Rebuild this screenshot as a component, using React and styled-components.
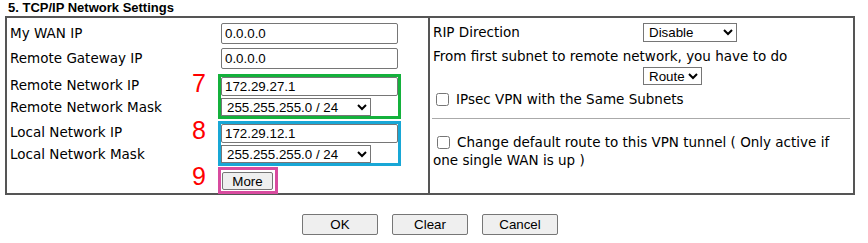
import styled, { createGlobalStyle } from 'styled-components';

const GlobalStyle = createGlobalStyle`
  body {
    margin: 0;
    background: #fff;
    color: #000;
    font-family: "DejaVu Sans", Verdana, sans-serif;
    font-size: 13.5px;
  }
`;

const Page = styled.div`
  width: 850px;
  padding-left: 5px;
`;

const Title = styled.div`
  font-family: "Liberation Sans", Arial, sans-serif;
  font-weight: bold;
  font-size: 13px;
  line-height: 15px;
  margin: 0 0 1px;
  padding-left: 3px;
`;

const Panel = styled.div`
  display: grid;
  grid-template-columns: 1fr 1fr;
  border: 2px solid #555;
  height: 175px;
`;

const LeftCell = styled.div`
  display: flex;
  flex-direction: column;
  padding: 5px 0 0 3px;
  border-right: 2px solid #555;
`;

const Row = styled.div`
  display: grid;
  grid-template-columns: 182px 26px auto;
  align-items: stretch;
  margin-top: ${({ $top }) => $top || 0}px;
`;

const Label = styled.div`
  line-height: ${({ $lh }) => $lh || 21}px;
  white-space: nowrap;
`;

const LabelStack = styled.div`
  display: flex;
  flex-direction: column;
  justify-content: space-around;
`;

const Num = styled.div`
  font-family: "Liberation Sans", Arial, sans-serif;
  font-size: 25px;
  line-height: 1;
  margin-top: -3px;
  color: #ff0000;
`;

const Control = styled.div`
  padding-left: 3px;
`;

const Mark = styled.div`
  display: flex;
  flex-direction: column;
  align-items: flex-start;
  gap: 2px;
  width: fit-content;
  border: 3px solid ${({ $color }) => $color};
  padding: ${({ $pad }) => $pad || '0'};
`;

const TextInput = styled.input`
  box-sizing: border-box;
  width: 177px;
  height: ${({ $h }) => $h || 21}px;
  border: 1px solid #767676;
  border-radius: 2px;
  padding: 1px 3px;
  font-family: "Liberation Sans", Arial, sans-serif;
  font-size: 13.33px;
  color: #000;
  background: #fff;
  outline: none;
`;

const Select = styled.select`
  box-sizing: border-box;
  width: ${({ $w }) => $w}px;
  height: ${({ $h }) => $h || 18}px;
  border: 1px solid #767676;
  border-radius: 0;
  padding: 0 0 0 1px;
  font-family: "Liberation Sans", Arial, sans-serif;
  font-size: 13.33px;
  color: #000;
  background: #fff;
`;

const SmallButton = styled.button`
  box-sizing: border-box;
  width: ${({ $w }) => $w}px;
  height: ${({ $h }) => $h}px;
  border: 1px solid #767676;
  border-radius: 2px;
  background: #efefef;
  font-family: "Liberation Sans", Arial, sans-serif;
  font-size: 13.33px;
  color: #000;
  padding: 0;
`;

const RightCell = styled.div`
  display: flex;
  flex-direction: column;
  padding: 0 3px;
`;

const FieldRow = styled.div`
  display: grid;
  grid-template-columns: 210px auto;
  align-items: center;
  height: ${({ $h }) => $h}px;
`;

const Line = styled.div`
  line-height: 20px;
  white-space: nowrap;
`;

const CheckRow = styled.label`
  display: flex;
  align-items: center;
  height: 26px;
  gap: 4px;
`;

const Check = styled.input.attrs({ type: 'checkbox' })`
  width: 13px;
  height: 13px;
  margin: 3px 3px 3px ${({ $left }) => $left || 3}px;
`;

const Divider = styled.hr`
  border: 0;
  border-top: 1px solid #aaa;
  margin: 6px 0 0 -1px;
`;

const Note = styled.p`
  margin: 14px 0 0;
  line-height: 16px;
  width: 405px;

  ${Check} {
    vertical-align: -2px;
    margin-right: 7px;
  }
`;

const ButtonBar = styled.div`
  display: flex;
  justify-content: center;
  gap: 14px;
  margin-top: 19px;
`;

const masks = ['255.255.255.0 / 24', '255.255.0.0 / 16', '255.0.0.0 / 8'];

const MaskSelect = () => (
  <Select $w={150} defaultValue={masks[0]}>
    {masks.map((m) => (
      <option key={m}>{m}</option>
    ))}
  </Select>
);

const App = () => {
  return (
    <Page>
      <GlobalStyle />
      <Title>5. TCP/IP Network Settings</Title>
      <Panel>
        <LeftCell>
          <Row>
            <Label>My WAN IP</Label>
            <span />
            <Control>
              <TextInput defaultValue="0.0.0.0" />
            </Control>
          </Row>
          <Row $top={4}>
            <Label>Remote Gateway IP</Label>
            <span />
            <Control>
              <TextInput defaultValue="0.0.0.0" />
            </Control>
          </Row>
          <Row $top={5}>
            <LabelStack>
              <Label $lh={17}>Remote Network IP</Label>
              <Label $lh={17}>Remote Network Mask</Label>
            </LabelStack>
            <Num>7</Num>
            <Mark $color="#14b13c">
              <TextInput $h={19} defaultValue="172.29.27.1" />
              <MaskSelect />
            </Mark>
          </Row>
          <Row $top={2}>
            <LabelStack>
              <Label $lh={17}>Local Network IP</Label>
              <Label $lh={17}>Local Network Mask</Label>
            </LabelStack>
            <Num>8</Num>
            <Mark $color="#18a7d6">
              <TextInput $h={19} defaultValue="172.29.12.1" />
              <MaskSelect />
            </Mark>
          </Row>
          <Row $top={1}>
            <span />
            <Num>9</Num>
            <Mark $color="#d84b9f" $pad="2px 2px 1px 1px">
              <SmallButton $w={51} $h={18}>More</SmallButton>
            </Mark>
          </Row>
        </LeftCell>
        <RightCell>
          <FieldRow $h={28}>
            <Line>RIP Direction</Line>
            <Select $w={94} $h={19} defaultValue="Disable">
              <option>Disable</option>
              <option>TX</option>
              <option>RX</option>
              <option>TX/RX</option>
            </Select>
          </FieldRow>
          <Line>From first subnet to remote network, you have to do</Line>
          <FieldRow $h={20}>
            <span />
            <Select $w={59} defaultValue="Route">
              <option>Route</option>
              <option>NAT</option>
            </Select>
          </FieldRow>
          <CheckRow>
            <Check />
            IPsec VPN with the Same Subnets
          </CheckRow>
          <Divider />
          <Note>
            <Check $left={4} />
            Change default route to this VPN tunnel ( Only active if one single WAN is up )
          </Note>
        </RightCell>
      </Panel>
      <ButtonBar>
        <SmallButton $w={76} $h={21}>OK</SmallButton>
        <SmallButton $w={76} $h={21}>Clear</SmallButton>
        <SmallButton $w={76} $h={21}>Cancel</SmallButton>
      </ButtonBar>
    </Page>
  );
};

export default App;
